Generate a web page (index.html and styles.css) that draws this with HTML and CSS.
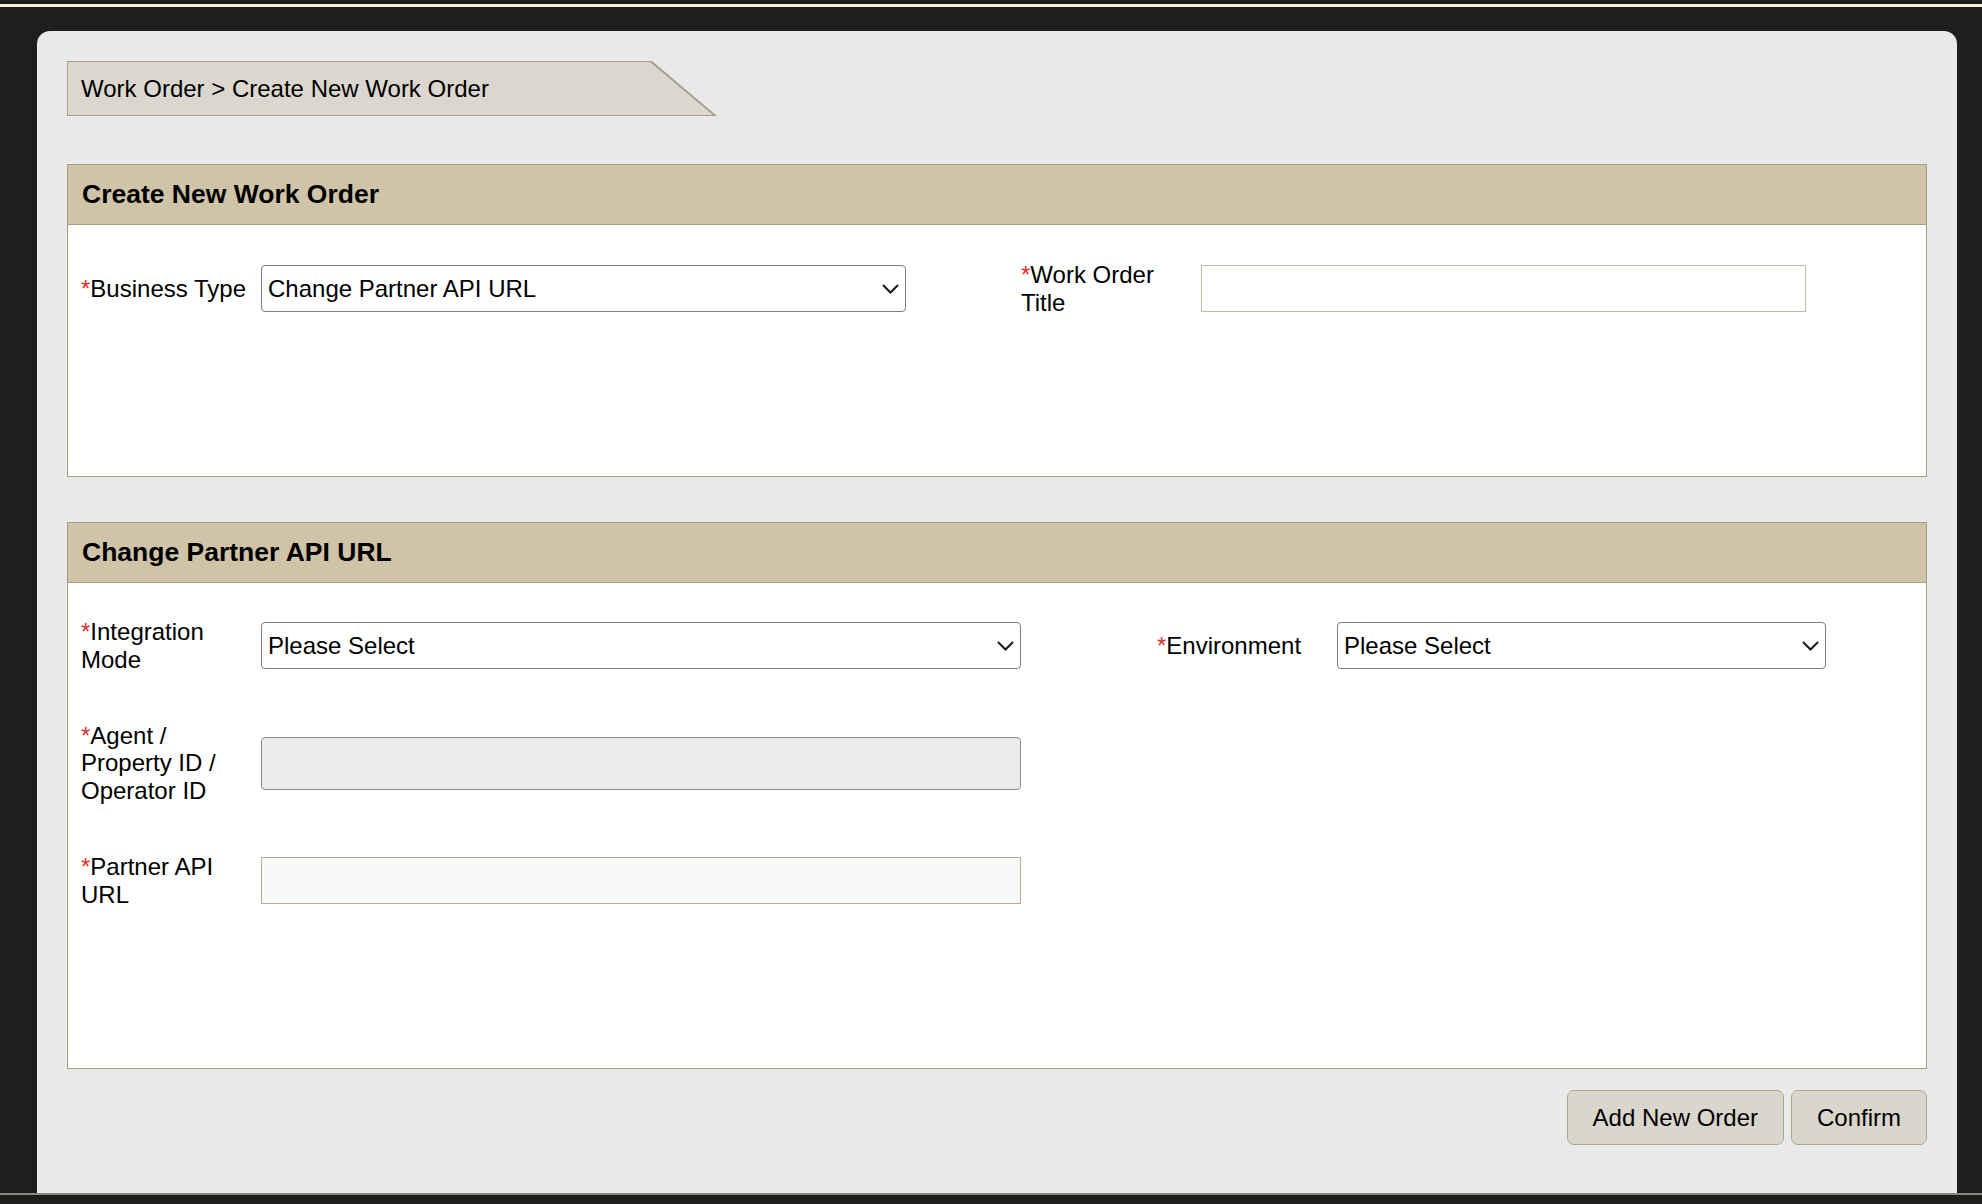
FILE: index.html
```html
<!DOCTYPE html>
<html lang="en">
<head>
<meta charset="utf-8">
<title>Create New Work Order</title>
<link rel="stylesheet" href="styles.css">
</head>
<body>
<div class="topline"></div>
<main class="card">
  <div class="crumb"><div class="crumb-inner">Work Order &gt; Create New Work Order</div></div>

  <section class="panel panel-first">
    <h2 class="panel-head">Create New Work Order</h2>
    <div class="panel-body body-first">
      <div class="row">
        <div class="field">
          <label class="label req">Business Type</label>
          <div class="select-wrap w-business">
            <select class="select"><option>Change Partner API URL</option></select>
            <svg class="chev" viewBox="0 0 17 10" width="17" height="10"><path d="M1 1 L8.5 8.5 L16 1" fill="none" stroke="#1a1a1a" stroke-width="2"/></svg>
          </div>
        </div>
        <div class="field field-title">
          <label class="label req">Work Order Title</label>
          <input class="text text-title" type="text">
        </div>
      </div>
    </div>
  </section>

  <section class="panel panel-second">
    <h2 class="panel-head">Change Partner API URL</h2>
    <div class="panel-body body-second">
      <div class="row">
        <div class="field">
          <label class="label req">Integration Mode</label>
          <div class="select-wrap w-wide">
            <select class="select"><option>Please Select</option></select>
            <svg class="chev" viewBox="0 0 17 10" width="17" height="10"><path d="M1 1 L8.5 8.5 L16 1" fill="none" stroke="#1a1a1a" stroke-width="2"/></svg>
          </div>
        </div>
        <div class="field field-env">
          <label class="label req">Environment</label>
          <div class="select-wrap w-env">
            <select class="select"><option>Please Select</option></select>
            <svg class="chev" viewBox="0 0 17 10" width="17" height="10"><path d="M1 1 L8.5 8.5 L16 1" fill="none" stroke="#1a1a1a" stroke-width="2"/></svg>
          </div>
        </div>
      </div>
      <div class="row">
        <div class="field">
          <label class="label req">Agent / Property ID / Operator ID</label>
          <input class="text text-disabled w-wide" type="text" disabled>
        </div>
      </div>
      <div class="row">
        <div class="field">
          <label class="label req">Partner API URL</label>
          <input class="text text-url w-wide" type="text">
        </div>
      </div>
    </div>
  </section>

  <div class="actions">
    <button class="btn" type="button">Add New Order</button>
    <button class="btn" type="button">Confirm</button>
  </div>
</main>
<div class="bottomline"></div>
</body>
</html>
```

FILE: styles.css
```css
* { box-sizing: border-box; }

html, body {
  margin: 0;
  padding: 0;
}

body {
  height: 1204px;
  overflow: hidden;
  background: #1e1e1e;
  font-family: "Liberation Sans", Arial, Helvetica, sans-serif;
  font-size: 24px;
  color: #000;
}

.topline {
  margin-top: 4px;
  height: 3px;
  background: #fbf1d8;
}

.card {
  margin: 24px 25px 0 37px;
  height: 1162px;
  background: #e9e9e9;
  border-radius: 13px 13px 0 0;
  padding: 30px 30px 0 30px;
}

.bottomline {
  height: 2px;
  background: #8c877b;
}

/* breadcrumb */
.crumb {
  width: 650px;
  height: 55px;
  background: #a99f88;
  clip-path: polygon(0 0, 585px 0, 100% 100%, 0 100%);
  padding: 1px 0 1px 1px;
}

.crumb-inner {
  height: 100%;
  background: #dbd7cf;
  clip-path: polygon(0 0, 582px 0, 645px 100%, 0 100%);
  display: flex;
  align-items: center;
  padding-left: 13px;
  line-height: 1.15;
}

/* panels */
.panel {
  border: 1px solid #a89e86;
  background: #fff;
}

.panel-first { margin-top: 48px; }
.panel-second { margin-top: 45px; }

.panel-head {
  margin: 0;
  height: 60px;
  background: #cfc4a8;
  border-bottom: 1px solid #a89e86;
  display: flex;
  align-items: center;
  padding-left: 14px;
  font-size: 26.5px;
  font-weight: bold;
  line-height: 1.15;
}

.panel-body {
  padding: 36px 0 160px 13px;
  display: flex;
  flex-direction: column;
  gap: 48.5px;
}

.body-second { padding-top: 35px; }

.row {
  display: flex;
  align-items: center;
}

.field {
  display: flex;
  align-items: center;
}

.field-title { margin-left: 115px; }
.field-env { margin-left: 136px; }

.label {
  display: block;
  width: 170px;
  margin-right: 10px;
  line-height: 1.15;
}

.req::before {
  content: "*";
  color: #e2312b;
}

/* controls */
.select-wrap {
  position: relative;
}

.select {
  -webkit-appearance: none;
  appearance: none;
  display: block;
  width: 100%;
  height: 47px;
  margin: 0;
  border: 1px solid #808080;
  border-radius: 4px;
  background: #fff;
  color: #000;
  font-family: inherit;
  font-size: 24px;
  padding: 0 34px 0 6px;
}

.chev {
  position: absolute;
  right: 7px;
  top: 50%;
  transform: translateY(-50%);
  pointer-events: none;
}

.w-business { width: 645px; }
.w-wide { width: 760px; }
.w-env { width: 489px; }

.text {
  display: block;
  height: 47px;
  margin: 0;
  padding: 0 6px;
  font-family: inherit;
  font-size: 24px;
  background: #fff;
  border: 1px solid #c3baa5;
  border-radius: 0;
}

.text-title { width: 605px; }

.text-disabled {
  height: 53px;
  background: #ececea;
  border: 1px solid #8e8e8e;
  border-radius: 4px;
}

.text-url {
  background: #f9f9f9;
  border: 1px solid #b8ab8c;
}

/* actions */
.actions {
  margin-top: 21px;
  display: flex;
  justify-content: flex-end;
  gap: 7px;
}

.btn {
  height: 55px;
  padding: 0 25px;
  font-family: inherit;
  font-size: 24px;
  color: #000;
  background: #dad6ce;
  border: 1px solid #b2a58a;
  border-radius: 7px;
}
```
